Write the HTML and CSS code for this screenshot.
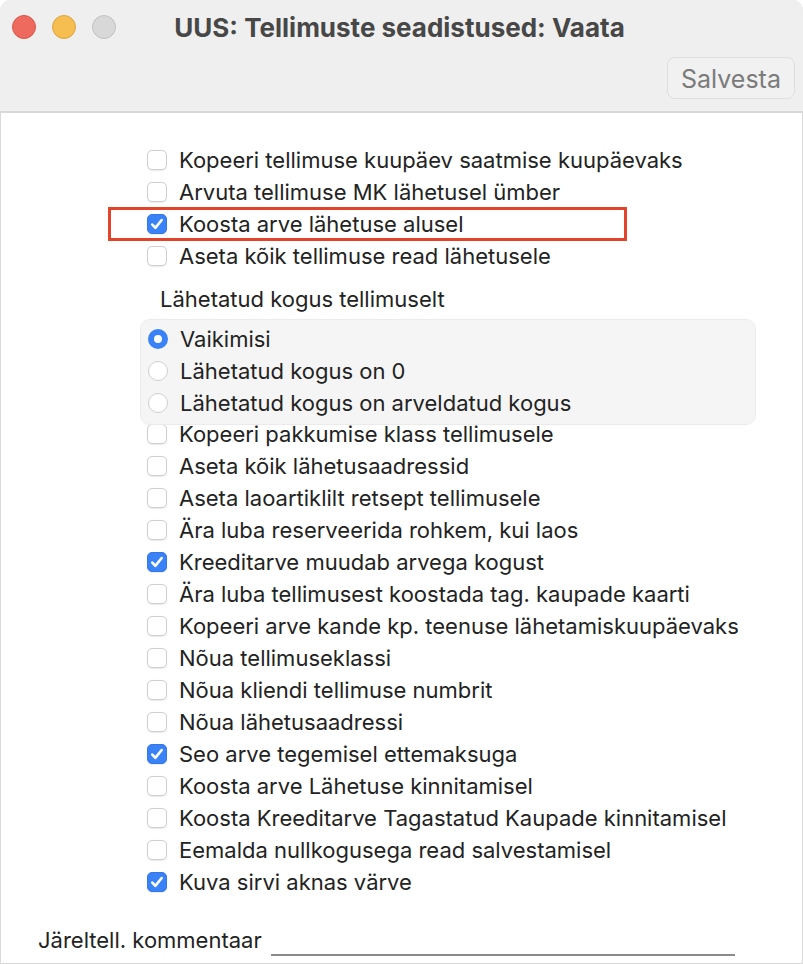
FILE: index.html
```html
<!DOCTYPE html>
<html lang="et">
<head>
<meta charset="utf-8">
<title>UUS: Tellimuste seadistused: Vaata</title>
<link rel="stylesheet" href="styles.css">
</head>
<body>
<div class="window">
  <header class="titlebar">
    <div class="titlerow">
      <div class="lights">
        <span class="light red"></span>
        <span class="light yellow"></span>
        <span class="light gray"></span>
      </div>
      <div class="title">UUS: Tellimuste seadistused: Vaata</div>
    </div>
    <div class="toolbar">
      <button class="btn">Salvesta</button>
    </div>
  </header>
  <main class="content">
    <div class="list">
      <label class="row"><span class="cb"></span><span class="lbl">Kopeeri tellimuse kuupäev saatmise kuupäevaks</span></label>
      <label class="row"><span class="cb"></span><span class="lbl">Arvuta tellimuse MK lähetusel ümber</span></label>
      <label class="row"><span class="cb on"><svg viewBox="0 0 20 20"><path d="M4.8 10.6l3.4 3.7L15.2 5.6" /></svg></span><span class="lbl">Koosta arve lähetuse alusel</span><span class="mark"></span></label>
      <label class="row"><span class="cb"></span><span class="lbl">Aseta kõik tellimuse read lähetusele</span></label>
    </div>
    <div class="heading">Lähetatud kogus tellimuselt</div>
    <div class="radiobox">
      <label class="row"><span class="rb on"></span><span class="lbl">Vaikimisi</span></label>
      <label class="row"><span class="rb"></span><span class="lbl">Lähetatud kogus on 0</span></label>
      <label class="row"><span class="rb"></span><span class="lbl">Lähetatud kogus on arveldatud kogus</span></label>
    </div>
    <div class="list">
      <label class="row"><span class="cb"></span><span class="lbl">Kopeeri pakkumise klass tellimusele</span></label>
      <label class="row"><span class="cb"></span><span class="lbl">Aseta kõik lähetusaadressid</span></label>
      <label class="row"><span class="cb"></span><span class="lbl">Aseta laoartiklilt retsept tellimusele</span></label>
      <label class="row"><span class="cb"></span><span class="lbl">Ära luba reserveerida rohkem, kui laos</span></label>
      <label class="row"><span class="cb on"><svg viewBox="0 0 20 20"><path d="M4.8 10.6l3.4 3.7L15.2 5.6" /></svg></span><span class="lbl">Kreeditarve muudab arvega kogust</span></label>
      <label class="row"><span class="cb"></span><span class="lbl">Ära luba tellimusest koostada tag. kaupade kaarti</span></label>
      <label class="row"><span class="cb"></span><span class="lbl">Kopeeri arve kande kp. teenuse lähetamiskuupäevaks</span></label>
      <label class="row"><span class="cb"></span><span class="lbl">Nõua tellimuseklassi</span></label>
      <label class="row"><span class="cb"></span><span class="lbl">Nõua kliendi tellimuse numbrit</span></label>
      <label class="row"><span class="cb"></span><span class="lbl">Nõua lähetusaadressi</span></label>
      <label class="row"><span class="cb on"><svg viewBox="0 0 20 20"><path d="M4.8 10.6l3.4 3.7L15.2 5.6" /></svg></span><span class="lbl">Seo arve tegemisel ettemaksuga</span></label>
      <label class="row"><span class="cb"></span><span class="lbl">Koosta arve Lähetuse kinnitamisel</span></label>
      <label class="row"><span class="cb"></span><span class="lbl">Koosta Kreeditarve Tagastatud Kaupade kinnitamisel</span></label>
      <label class="row"><span class="cb"></span><span class="lbl">Eemalda nullkogusega read salvestamisel</span></label>
      <label class="row"><span class="cb on"><svg viewBox="0 0 20 20"><path d="M4.8 10.6l3.4 3.7L15.2 5.6" /></svg></span><span class="lbl">Kuva sirvi aknas värve</span></label>
    </div>
    <div class="comment">
      <span class="clabel">Järeltell. kommentaar</span>
      <span class="cline"></span>
    </div>
  </main>
</div>
</body>
</html>
```
FILE: styles.css
```css
* { box-sizing: border-box; }
html, body {
  margin: 0;
  padding: 0;
  background: #ffffff;
}
body {
  width: 803px;
  height: 964px;
  overflow: hidden;
  font-family: "Inter", "Liberation Sans", sans-serif;
  color: #232323;
}
.window {
  width: 803px;
  height: 964px;
  border-radius: 11px 11px 0 0;
  overflow: hidden;
  background: #ffffff;
  box-shadow: inset 0 0 0 1px #d9d9d9;
}
.titlebar {
  height: 113px;
  background: #efefef;
  border-bottom: 2px solid #d8d8d8;
  display: flex;
  flex-direction: column;
}
.titlerow {
  height: 54px;
  display: flex;
  align-items: center;
}
.lights {
  display: flex;
  gap: 16px;
  padding-left: 12px;
}
.light {
  width: 24px;
  height: 24px;
  border-radius: 50%;
  display: block;
}
.light.red { background: #ee6a5f; border: 1px solid #d7574c; }
.light.yellow { background: #f6be50; border: 1px solid #dca43f; }
.light.gray { background: #d8d8d8; border: 1px solid #c2c2c2; }
.title {
  flex: 1;
  text-align: center;
  font-weight: 700;
  font-size: 26px;
  color: #474747;
  margin-left: -120px;
}
.toolbar {
  display: flex;
  justify-content: flex-end;
  padding-right: 8px;
  padding-top: 3px;
}
.btn {
  width: 128px;
  height: 42px;
  border: 1px solid #dedede;
  border-radius: 8px;
  background: #f1f1f1;
  font-family: "Inter", "Liberation Sans", sans-serif;
  font-size: 25px;
  color: #7b7b7b;
  padding: 2px 0 0;
}
.content {
  padding-top: 31px;
}
.list {
  padding-left: 147px;
  display: flex;
  flex-direction: column;
}
.row {
  height: 32px;
  display: flex;
  align-items: center;
  gap: 12px;
  position: relative;
}
.lbl {
  font-size: 22px;
  white-space: nowrap;
  line-height: 1;
}
.cb {
  width: 20px;
  height: 20px;
  border-radius: 5px;
  background: #ffffff;
  border: 1px solid #cfcfcf;
  box-shadow: 0 0.5px 1px rgba(0,0,0,0.08);
  flex: none;
  display: flex;
  align-items: center;
  justify-content: center;
}
.cb.on {
  background: #3a82f7;
  border-color: #3477e8;
}
.cb svg {
  width: 20px;
  height: 20px;
  fill: none;
  stroke: #ffffff;
  stroke-width: 2.9;
  stroke-linecap: round;
  stroke-linejoin: round;
}
.mark {
  position: absolute;
  left: -39px;
  top: -1px;
  width: 519px;
  height: 34px;
  border: 3px solid #e3432b;
  pointer-events: none;
}
.heading {
  margin-top: 15px;
  margin-bottom: 8px;
  padding-left: 160px;
  font-size: 22px;
  line-height: 24px;
  white-space: nowrap;
}
.radiobox {
  margin-left: 140px;
  width: 616px;
  height: 106px;
  padding: 3px 0 0 7px;
  background: #f5f5f5;
  border: 1px solid #ebebeb;
  border-radius: 10px;
  margin-bottom: -7px;
  position: relative;
  z-index: 1;
}
.rb {
  width: 20px;
  height: 20px;
  border-radius: 50%;
  background: #ffffff;
  border: 1px solid #cfcfcf;
  flex: none;
}
.rb.on {
  background: #3a82f7;
  border: 6px solid #3a82f7;
}
.rb.on::after {
  content: "";
  display: block;
  width: 8px;
  height: 8px;
  border-radius: 50%;
  background: #ffffff;
}
.comment {
  margin-top: 26px;
  padding-left: 38px;
  display: flex;
  align-items: center;
  gap: 9px;
}
.clabel {
  font-size: 22px;
  white-space: nowrap;
}
.cline {
  width: 464px;
  height: 2px;
  background: #8b8b8b;
  margin-top: 30px;
}
```
